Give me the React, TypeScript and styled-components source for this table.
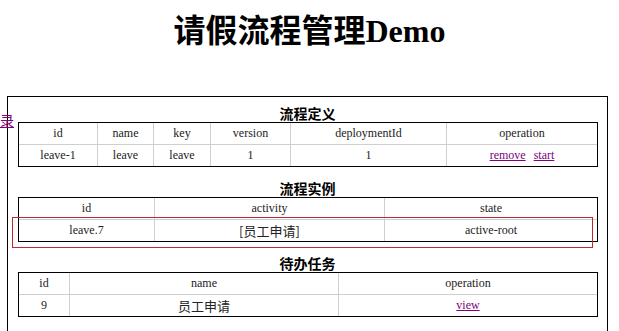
import React from 'react';
import styled, { createGlobalStyle } from 'styled-components';

const GlobalStyle = createGlobalStyle`
    html, body {
        margin: 0;
        padding: 0;
        background: #fff;
        overflow: hidden;
    }
    body {
        font-family: "Liberation Serif", "Noto Sans CJK SC", serif;
        color: #222;
    }
`;

const Page = styled.div`
    position: relative;
    width: 619px;
    height: 331px;
`;

const Title = styled.h1`
    margin: 11px 0 0;
    height: 85px;
    line-height: 40px;
    font-size: 32px;
    font-weight: bold;
    text-align: center;
    color: #000;
    font-family: "Liberation Serif", "Noto Sans CJK SC", serif;
`;

const BackLink = styled.a`
    position: absolute;
    left: -14px;
    top: 100px;
    font-size: 14px;
    line-height: 18px;
    color: #800080;
    text-decoration: underline;
    font-family: "Noto Sans CJK SC", sans-serif;
`;

const Panel = styled.div`
    box-sizing: border-box;
    width: 601px;
    height: 240px;
    margin-left: 7px;
    border: 1px solid #000;
    border-bottom: none;
    padding: 7px 10px 0;
    display: flex;
    flex-direction: column;
    gap: 12px;
`;

const Section = styled.section`
    position: relative;
`;

const Caption = styled.div`
    height: 18px;
    line-height: 18px;
    text-align: center;
    font-size: 14px;
    font-weight: bold;
    color: #000;
    font-family: "Noto Sans CJK SC", sans-serif;
`;

const Grid = styled.table`
    width: 578px;
    table-layout: fixed;
    border-collapse: separate;
    border-spacing: 0;
    border: 1px solid #000;
    font-family: "Liberation Serif", "Noto Sans CJK SC", serif;
    font-size: 12px;
    color: #222;

    td {
        height: 21px;
        padding: 0;
        text-align: center;
        vertical-align: middle;
        font-family: "Liberation Serif", "Noto Sans CJK SC", serif;
        font-size: 12px;
        color: #222;
        border-left: 1px solid #cfcfcf;
        border-top: 1px solid #cfcfcf;
    }
    td:first-child {
        border-left: none;
    }
    tr:first-child td {
        border-top: none;
    }
`;

const Cjk = styled.span`
    font-family: "Noto Sans CJK SC", sans-serif;
    font-size: 13px;
`;

const Op = styled.a`
    color: #800080;
    text-decoration: underline;
    margin: 0 4px;
`;

const Highlight = styled.div`
    position: absolute;
    left: -6px;
    top: 38px;
    width: 581px;
    height: 31px;
    box-sizing: border-box;
    border: 1px solid #c0282d;
    pointer-events: none;
`;

const Cols = ({ widths }: { widths: number[] }) => (
    <colgroup>
        {widths.map((w, i) => <col key={i} style={{ width: w }} />)}
    </colgroup>
);

export default function App() {
    return (
        <Page>
            <GlobalStyle />
            <Title>请假流程管理Demo</Title>
            <BackLink href="#">目录</BackLink>
            <Panel>
                <Section>
                    <Caption>流程定义</Caption>
                    <Grid>
                        <Cols widths={[78, 56, 57, 80, 156, 151]} />
                        <tbody>
                            <tr>
                                <td>id</td><td>name</td><td>key</td><td>version</td><td>deploymentId</td><td>operation</td>
                            </tr>
                            <tr>
                                <td>leave-1</td><td>leave</td><td>leave</td><td>1</td><td>1</td>
                                <td><Op href="#">remove</Op><Op href="#">start</Op></td>
                            </tr>
                        </tbody>
                    </Grid>
                </Section>
                <Section>
                    <Caption>流程实例</Caption>
                    <Grid>
                        <Cols widths={[135, 230, 213]} />
                        <tbody>
                            <tr><td>id</td><td>activity</td><td>state</td></tr>
                            <tr><td>leave.7</td><td><Cjk>[员工申请]</Cjk></td><td>active-root</td></tr>
                        </tbody>
                    </Grid>
                    <Highlight />
                </Section>
                <Section>
                    <Caption>待办任务</Caption>
                    <Grid>
                        <Cols widths={[50, 269, 259]} />
                        <tbody>
                            <tr><td>id</td><td>name</td><td>operation</td></tr>
                            <tr><td>9</td><td><Cjk>员工申请</Cjk></td><td><Op href="#">view</Op></td></tr>
                        </tbody>
                    </Grid>
                </Section>
            </Panel>
        </Page>
    );
}
